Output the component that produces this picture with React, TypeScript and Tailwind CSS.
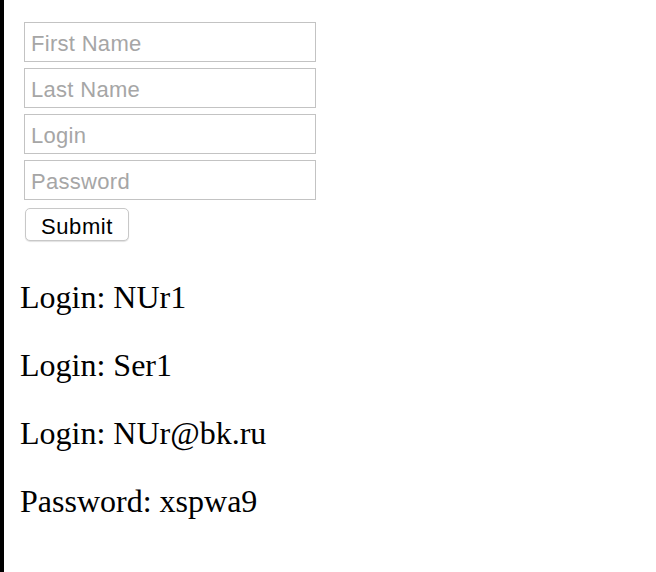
import { useState } from 'react';

// Users shown under the form
const entries = [
    { label: 'Login', value: 'NUr1' },
    { label: 'Login', value: 'Ser1' },
    { label: 'Login', value: 'NUr@bk.ru' },
    { label: 'Password', value: 'xspwa9' },
];

const fields = ['First Name', 'Last Name', 'Login', 'Password'];

export default function App() {
    const [values, setValues] = useState<Record<string, string>>({});

    return (
        <div className="flex h-[572px] w-full bg-white">
            {/* Left edge bar */}
            <div className="w-[4px] shrink-0 bg-black"></div>

            <div className="flex-1 pl-[16px] pt-[22px]">
                {/* Form */}
                <form
                    className="ml-[4px] flex flex-col gap-[6px]"
                    onSubmit={(e) => e.preventDefault()}
                    style={{ fontFamily: '"Liberation Sans", Arial, sans-serif' }}
                >
                    {fields.map((field) => (
                        <input
                            key={field}
                            type={field === 'Password' ? 'password' : 'text'}
                            placeholder={field}
                            value={values[field] || ''}
                            onChange={(e) => setValues({ ...values, [field]: e.target.value })}
                            className="h-[40px] w-[292px] border border-[#c3c3c3] bg-white px-[6px] pt-[4px] text-[22px] tracking-[0.3px] text-black outline-none placeholder:text-[#a6a6a6]"
                        />
                    ))}
                    <button
                        type="submit"
                        className="mt-[2px] ml-[1px] h-[33px] w-[104px] rounded-[5px] border border-[#c8c8c8] bg-white pt-[1px] text-[22px] tracking-[0.6px] text-black shadow-[0_1px_1px_rgba(0,0,0,0.12)]"
                    >
                        Submit
                    </button>
                </form>

                {/* Entries */}
                <div
                    className="mt-[38px] flex flex-col gap-[32px] text-[32px] leading-[36px] text-black"
                    style={{ fontFamily: '"Liberation Serif", "Times New Roman", serif' }}
                >
                    {entries.map((entry, i) => (
                        <p key={i}>
                            {entry.label}: {entry.value}
                        </p>
                    ))}
                </div>
            </div>
        </div>
    );
}
